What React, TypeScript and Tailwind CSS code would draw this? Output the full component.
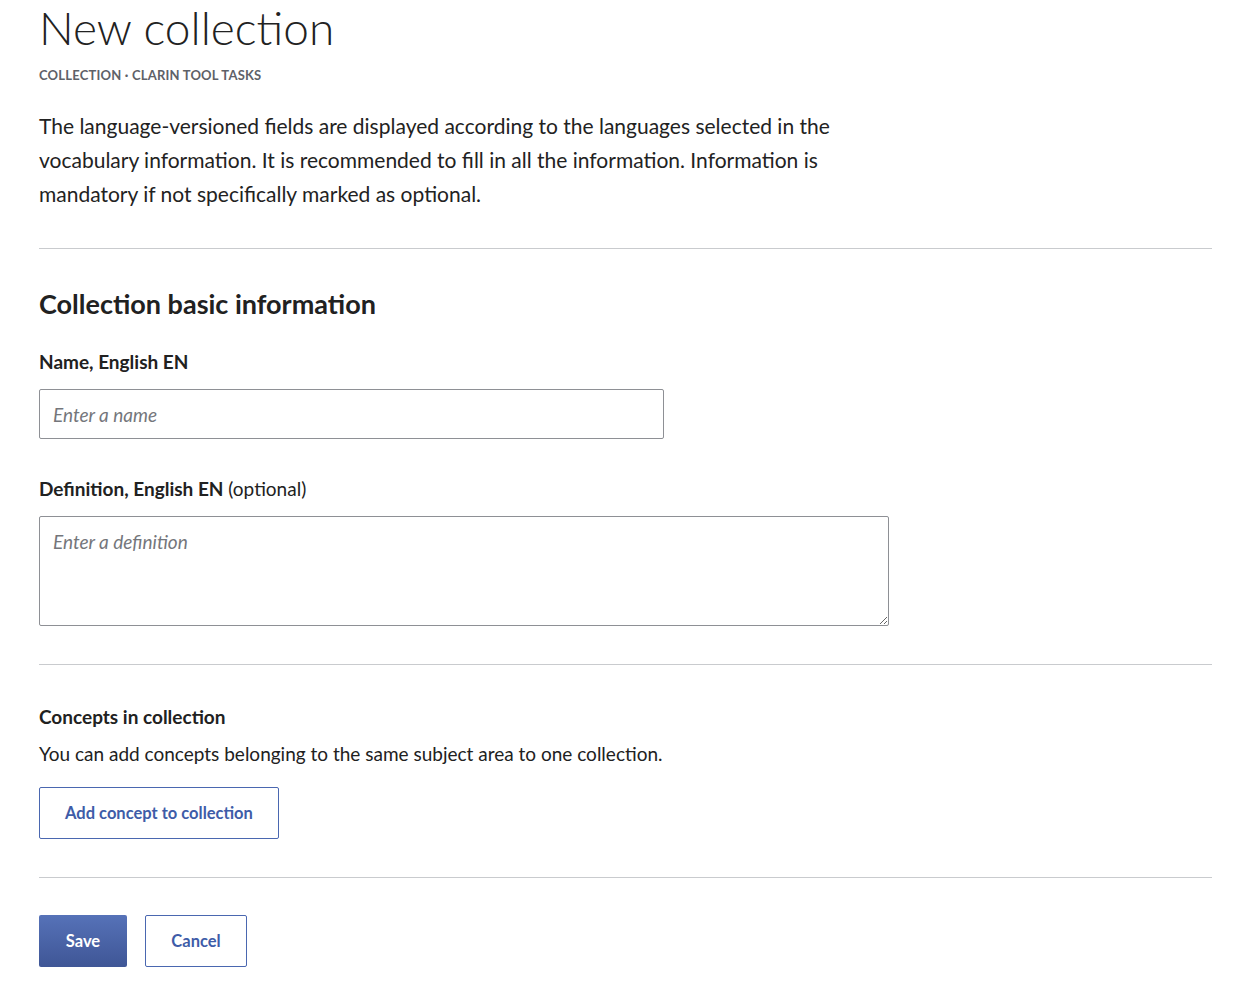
import React from 'react';

function Divider() {
  return <hr className="border-0 border-t border-[#c9cbce]" />;
}

function FieldLabel({ children, optional }: { children: React.ReactNode; optional?: boolean }) {
  return (
    <label className="block text-[19px] leading-[24px] font-bold text-[#212121]">
      {children}
      {optional && <span className="font-normal"> (optional)</span>}
    </label>
  );
}

export default function App() {
  return (
    <div className="min-h-screen bg-white text-[#212121] font-['Lato','Liberation_Sans',sans-serif]">
      <div className="pl-[39px] pr-[48px]">
        {/* Header */}
        <h1 className="text-[46px] leading-[56px] font-light text-[#222]">New collection</h1>
        <p className="mt-[10px] text-[13px] leading-[18px] font-bold uppercase tracking-[0.2px] text-[#5e6168]">
          Collection · CLARIN TOOL TASKS
        </p>
        <p className="mt-[25px] max-w-[860px] text-[21px] leading-[34px] text-[#222]">
          The language-versioned fields are displayed according to the languages selected in the vocabulary
          information. It is recommended to fill in all the information. Information is mandatory if not
          specifically marked as optional.
        </p>

        <div className="mt-[37px]">
          <Divider />
        </div>

        {/* Basic info */}
        <h2 className="mt-[38px] text-[27px] leading-[34px] font-bold text-[#212121]">Collection basic information</h2>

        <div className="mt-[29px]">
          <FieldLabel>Name, English EN</FieldLabel>
          <input
            placeholder="Enter a name"
            className="mt-[15px] block w-[625px] h-[50px] border border-[#8e9095] rounded-[2px] px-[13px] text-[19px] bg-white placeholder:italic placeholder:text-[#74767b] outline-none"
          />
        </div>

        <div className="mt-[38px]">
          <FieldLabel optional>Definition, English EN</FieldLabel>
          <textarea
            placeholder="Enter a definition"
            className="mt-[15px] block w-[850px] h-[110px] border border-[#8e9095] rounded-[2px] px-[13px] py-[12px] text-[19px] leading-[26px] bg-white placeholder:italic placeholder:text-[#74767b] outline-none resize"
          />
        </div>

        <div className="mt-[38px]">
          <Divider />
        </div>

        {/* Concepts */}
        <h3 className="mt-[40px] text-[19px] leading-[24px] font-bold text-[#212121]">Concepts in collection</h3>
        <p className="mt-[12px] text-[19px] leading-[26px] text-[#212121]">
          You can add concepts belonging to the same subject area to one collection.
        </p>
        <button className="mt-[20px] h-[52px] w-[240px] border border-[#4a67b0] rounded-[2px] bg-white text-[16.5px] font-bold text-[#3e5ca8]">
          Add concept to collection
        </button>

        <div className="mt-[38px]">
          <Divider />
        </div>

        {/* Actions */}
        <div className="mt-[37px] flex gap-[18px] pb-[18px]">
          <button className="h-[52px] w-[88px] rounded-[2px] bg-gradient-to-b from-[#5672b8] to-[#3f5696] text-white text-[16.5px] font-bold">
            Save
          </button>
          <button className="h-[52px] w-[102px] rounded-[2px] border border-[#4a67b0] bg-white text-[#3e5ca8] text-[16.5px] font-bold">
            Cancel
          </button>
        </div>
      </div>
    </div>
  );
}
